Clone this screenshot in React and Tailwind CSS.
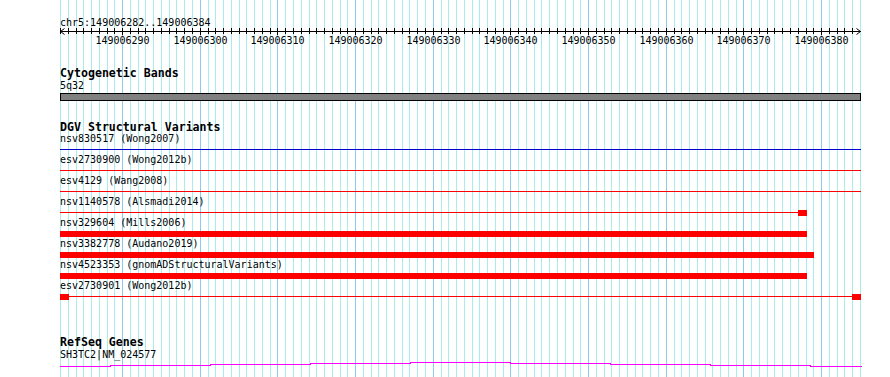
import React from 'react';

// region shown: chr5:149006282..149006384, one grid line per base
const START = 149006282;
const BASES = 103;
const gx = (k) => Math.round(60 + k * 7.766);

const minorColor = '#a8ecf0';
const majorColor = '#8acbee';

const dgvRows = [
  { label: 'nsv830517 (Wong2007)', kind: 'line', color: '#0000cc' },
  { label: 'esv2730900 (Wong2012b)', kind: 'line', color: '#ff0000' },
  { label: 'esv4129 (Wang2008)', kind: 'line', color: '#ff0000' },
  { label: 'nsv1140578 (Alsmadi2014)', kind: 'tailBox' },
  { label: 'nsv329604 (Mills2006)', kind: 'bar', end: 807 },
  { label: 'nsv3382778 (Audano2019)', kind: 'bar', end: 814 },
  { label: 'nsv4523353 (gnomADStructuralVariants)', kind: 'bar', end: 807 },
  { label: 'esv2730901 (Wong2012b)', kind: 'twoBox' },
];

// stepped transcript line for SH3TC2 (y is relative to the glyph strip)
const geneSegments = [
  [60, 110, 6], [110, 210, 5], [210, 310, 4], [310, 410, 3], [410, 510, 2],
  [510, 610, 3], [610, 710, 4], [710, 810, 5], [810, 861, 6],
];

const Grid = () => {
  const lines = [];
  for (let k = 0; k <= BASES; k++) {
    const major = (START + k) % 10 === 0;
    lines.push(<rect key={k} x={gx(k)} y={0} width={1} height={377} fill={major ? majorColor : minorColor} />);
  }
  return (
    <svg className="absolute inset-0" width="890" height="377" shapeRendering="crispEdges">
      {lines}
    </svg>
  );
};

const Ruler = () => {
  const ticks = [];
  const labels = [];
  for (let k = 0; k < BASES; k++) {
    const pos = START + k;
    const major = pos % 10 === 0;
    ticks.push(<rect key={k} x={gx(k)} y={0} width={1} height={major ? 7 : 6} fill="#000" />);
    if (major) {
      labels.push(
        <text key={k} x={gx(k) + 0.5} y={16} textAnchor="middle" fontSize="10" fontFamily="'DejaVu Sans Mono', monospace" fill="#000">
          {pos}
        </text>
      );
    }
  }
  return (
    <svg className="block" width="890" height="18">
      <g shapeRendering="crispEdges">
        <rect x={60} y={3} width={801} height={1} fill="#000" />
        {ticks}
      </g>
      <path d="M64.5 0.5 L60.5 3.5 L64.5 6.5 M856.5 0.5 L860.5 3.5 L856.5 6.5" stroke="#000" fill="none" strokeWidth="1" />
      {labels}
    </svg>
  );
};

const Glyph = ({ row }) => (
  <svg className="block" width="890" height="10" shapeRendering="crispEdges">
    {row.kind === 'line' && <rect x={60} y={5} width={801} height={1} fill={row.color} />}
    {row.kind === 'tailBox' && (
      <>
        <rect x={60} y={5} width={738} height={1} fill="#ff0000" />
        <rect x={798} y={3} width={9} height={6} fill="#ff0000" />
      </>
    )}
    {row.kind === 'bar' && <rect x={60} y={3} width={row.end - 60} height={6} fill="#ff0000" />}
    {row.kind === 'twoBox' && (
      <>
        <rect x={60} y={3} width={9} height={6} fill="#ff0000" />
        <rect x={69} y={5} width={783} height={1} fill="#ff0000" />
        <rect x={852} y={3} width={9} height={6} fill="#ff0000" />
      </>
    )}
  </svg>
);

const Label = ({ children, className = '' }) => (
  <div className={`h-[11px] pl-[60px] text-[10px] leading-[11px] whitespace-pre text-black ${className}`}>{children}</div>
);

const Title = ({ children, className = '' }) => (
  <div className={`h-[11px] pl-[60px] text-[11.6px] font-bold leading-[11px] whitespace-pre text-black ${className}`}>{children}</div>
);

export default function App() {
  return (
    <div className="relative w-[890px] h-[377px] overflow-hidden bg-white font-['DejaVu_Sans_Mono',monospace]">
      <Grid />
      <div className="relative flex flex-col pt-[17px]">
        <Label>chr5:149006282..149006384</Label>
        <Ruler />

        <Title className="mt-[22px]">Cytogenetic Bands</Title>
        <Label className="mt-[1px]">5q32</Label>
        <svg className="block mt-[2px]" width="890" height="8" shapeRendering="crispEdges">
          <rect x={60} y={0} width={801} height={8} fill="#000" />
          <rect x={61} y={1} width={799} height={6} fill="#808080" />
        </svg>

        <Title className="mt-[21px]">DGV Structural Variants</Title>
        {dgvRows.map((row) => (
          <div key={row.label} className="flex flex-col h-[21px]">
            <Label>{row.label}</Label>
            <Glyph row={row} />
          </div>
        ))}

        <Title className="mt-[36px]">RefSeq Genes</Title>
        <Label className="mt-[1px]">SH3TC2|NM_024577</Label>
        <svg className="block" width="890" height="17" shapeRendering="crispEdges">
          {geneSegments.map(([x1, x2, y]) => (
            <rect key={x1} x={x1} y={y} width={x2 - x1 + 1} height={1} fill="#ff00ff" />
          ))}
        </svg>
      </div>
    </div>
  );
}
